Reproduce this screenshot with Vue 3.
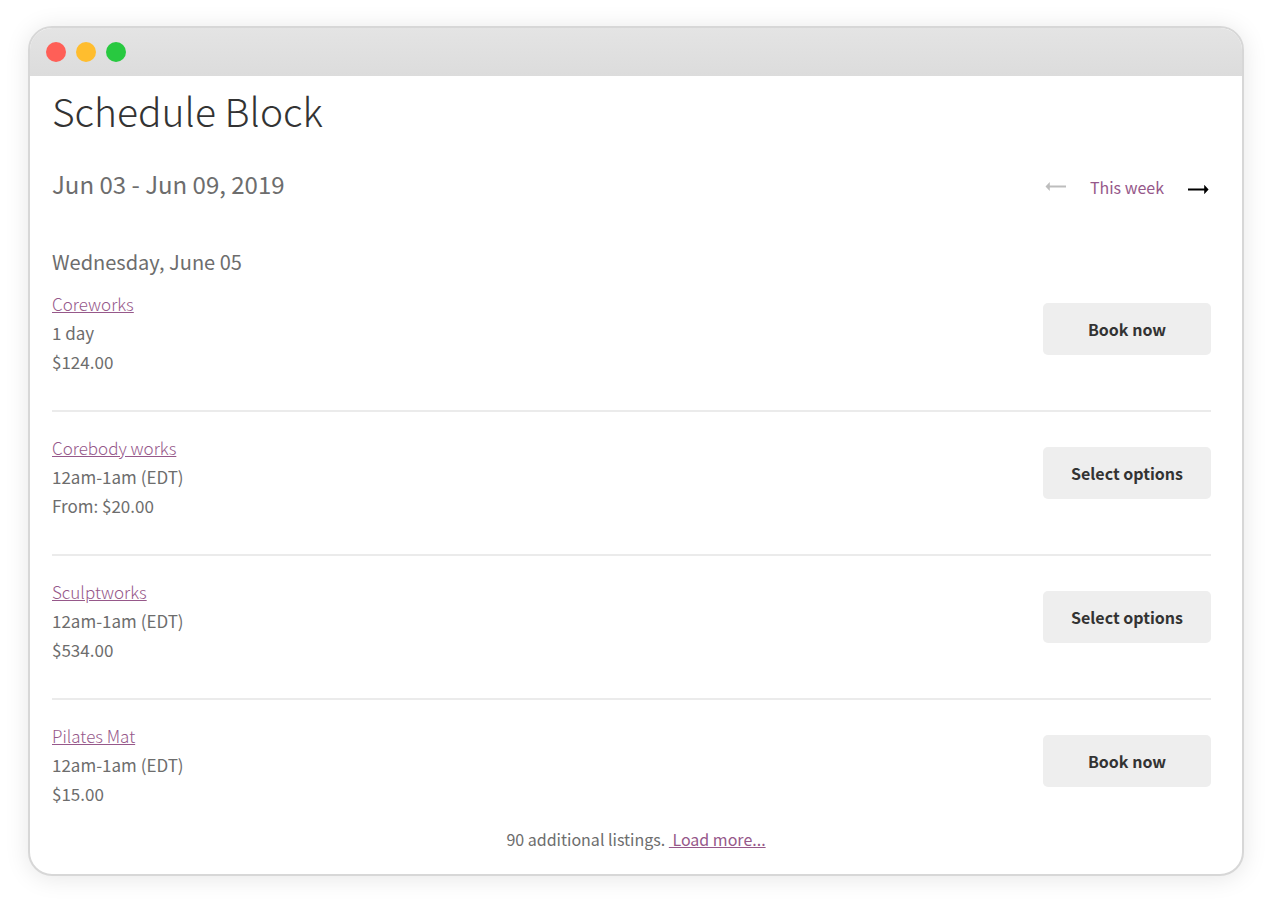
<script setup>
const listings = [
  { name: 'Coreworks', time: '1 day', price: '$124.00', action: 'Book now' },
  { name: 'Corebody works', time: '12am-1am (EDT)', price: 'From: $20.00', action: 'Select options' },
  { name: 'Sculptworks', time: '12am-1am (EDT)', price: '$534.00', action: 'Select options' },
  { name: 'Pilates Mat', time: '12am-1am (EDT)', price: '$15.00', action: 'Book now' },
]
</script>

<template>
  <div class="window">
    <div class="titlebar">
      <span class="light close"></span>
      <span class="light minimize"></span>
      <span class="light zoom"></span>
    </div>
    <main class="content">
      <h1>Schedule Block</h1>
      <div class="range">
        <h2>Jun 03 - Jun 09, 2019</h2>
        <nav class="weeks" aria-label="Week">
          <button class="arrow" type="button" disabled aria-label="Previous week">
            <svg width="22" height="16" viewBox="0 0 22 16">
              <path d="M0.5 6.5 L4.8 2 V5.5 H21 V7.5 H4.8 V11 Z" fill="#bdbdbd" />
            </svg>
          </button>
          <a href="#this-week">This week</a>
          <button class="arrow" type="button" aria-label="Next week">
            <svg width="22" height="16" viewBox="0 0 22 16">
              <path d="M21.6 9.5 L17.2 4.8 V8.4 H1 V10.6 H17.2 V14.2 Z" fill="#000" />
            </svg>
          </button>
        </nav>
      </div>
      <h3>Wednesday, June 05</h3>
      <ul class="listings">
        <li v-for="item in listings" :key="item.name">
          <div class="details">
            <a class="name" href="#listing">{{ item.name }}</a>
            <div>{{ item.time }}</div>
            <div>{{ item.price }}</div>
          </div>
          <button class="action" type="button">{{ item.action }}</button>
        </li>
      </ul>
      <p class="more">90 additional listings. <a href="#more">&nbsp;Load more...</a></p>
    </main>
  </div>
</template>

<style>
body {
  background: #fff;
}
</style>

<style scoped>
.window {
  margin: 26px 28px 24px;
  border: 2px solid #d7d7d7;
  border-radius: 24px;
  overflow: hidden;
  background: #fff;
  box-shadow: 0 2px 24px rgba(0, 0, 0, 0.1);
  font-family: "Source Sans Pro", "Noto Sans CJK JP", sans-serif;
  font-size: 16px;
  line-height: 29px;
  color: #6d6d6d;
}
.titlebar {
  display: flex;
  align-items: center;
  gap: 10px;
  height: 48px;
  padding: 0 16px;
  background: linear-gradient(#e4e4e4, #dcdcdc);
}
.light {
  width: 20px;
  height: 20px;
  border-radius: 50%;
}
.close { background: #ff5f57; }
.minimize { background: #ffbd2e; }
.zoom { background: #28c940; }
.content {
  padding: 6px 31px 20px 22px;
}
h1, h2, h3, p, ul {
  margin: 0;
  padding: 0;
  font-weight: 400;
}
h1 {
  font-size: 39px;
  line-height: 56px;
  font-weight: 300;
  color: #333;
}
.range {
  display: flex;
  justify-content: space-between;
  align-items: flex-end;
  margin-top: 28px;
}
h2 {
  font-size: 24px;
  line-height: 36px;
}
.weeks {
  display: flex;
  align-items: center;
  gap: 23px;
  padding-right: 2px;
}
.arrow {
  display: flex;
  padding: 0;
  border: 0;
  background: none;
}
a {
  color: #96588a;
}
.weeks a {
  text-decoration: none;
}
h3 {
  margin-top: 45px;
  font-size: 20px;
  line-height: 30px;
}
.listings {
  margin-top: 12px;
  list-style: none;
}
li {
  display: flex;
  justify-content: space-between;
  align-items: flex-start;
  padding-bottom: 34px;
  margin-bottom: 21px;
  border-bottom: 2px solid #ebebeb;
}
li:last-child {
  padding-bottom: 0;
  margin-bottom: 0;
  border-bottom: 0;
}
.details {
  font-size: 17px;
}
.name {
  font-weight: 300;
}
.action {
  width: 168px;
  height: 52px;
  margin-top: 14px;
  padding: 0;
  border: 0;
  border-radius: 5px;
  background: #eee;
  color: #333;
  font: inherit;
  font-weight: 700;
}
.more {
  margin-top: 17px;
  padding-left: 9px;
  text-align: center;
}
</style>
